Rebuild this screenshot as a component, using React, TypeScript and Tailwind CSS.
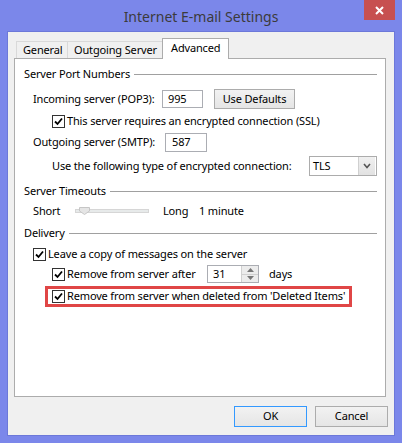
import React from "react"

function Check({ checked = true }: { checked?: boolean }) {
  return (
    <div className="w-[13px] h-[13px] shrink-0 border border-[#333333] bg-white flex items-center justify-center">
      {checked && (
        <svg width="9" height="9" viewBox="0 0 9 9">
          <path d="M1 4.5 L3.5 7 L8 1.5" fill="none" stroke="#000" strokeWidth="1.8" />
        </svg>
      )}
    </div>
  )
}

function GroupHeader({ label }: { label: string }) {
  return (
    <div className="h-[16px] flex items-center pl-[9px] pr-[8px]">
      <span className="whitespace-nowrap">{label}</span>
      <div className="flex-1 ml-[4px] h-px bg-[#a0a0a0]" />
    </div>
  )
}

export default function App() {
  return (
    <div
      className="w-[402px] h-[443px] bg-[#7b87ea] text-[11px] tracking-[-0.15px] text-black overflow-hidden"
      style={{ fontFamily: "'Noto Sans', 'Open Sans', sans-serif" }}
    >
      {/* title bar */}
      <div className="relative h-[31px] flex items-center justify-center">
        <span className="text-[14px] tracking-normal text-[#3b3b3b] pt-[1px]">Internet E-mail Settings</span>
        <div className="absolute right-[7px] top-0 w-[31px] h-[20px] bg-[#c75050] flex items-center justify-center">
          <svg width="9" height="9" viewBox="0 0 9 9">
            <path d="M1 1 L8 8 M8 1 L1 8" stroke="#fff" strokeWidth="2" />
          </svg>
        </div>
      </div>

      {/* client area */}
      <div className="ml-[7px] w-[388px] h-[405px] bg-[#f0f0f0] border border-[#6c78d9] flex flex-col">
        {/* tabs */}
        <div className="h-[26px] flex items-end pl-[8px] pt-[6px] whitespace-nowrap">
          <div className="h-[17px] w-[52px] border border-b-0 border-[#d9d9d9] bg-[#f0f0f0] flex items-center pl-[6px]">
            General
          </div>
          <div className="h-[17px] w-[95px] border border-b-0 border-l-0 border-[#d9d9d9] bg-[#f0f0f0] flex items-center pl-[6px]">
            Outgoing Server
          </div>
          <div className="relative -mb-px z-10 h-[21px] w-[67px] -ml-px border border-b-0 border-[#acacac] bg-white flex items-center pl-[8px] pb-[2px]">
            Advanced
          </div>
        </div>

        {/* panel */}
        <div className="ml-[6px] w-[372px] h-[339px] border border-[#acacac] bg-white flex flex-col">
          <div className="mt-[7px]">
            <GroupHeader label="Server Port Numbers" />
          </div>

          <div className="mt-[6px] h-[22px] flex items-center pl-[18px]">
            <div className="w-[129px] whitespace-nowrap">Incoming server (POP3):</div>
            <div className="w-[41px] h-[18px] border border-[#abadb3] bg-white flex items-center pl-[5px]">995</div>
            <div className="ml-[11px] w-[81px] h-[20px] border border-[#acacac] bg-gradient-to-b from-[#f2f2f2] to-[#e5e5e5] flex items-center justify-center">
              Use Defaults
            </div>
          </div>

          <div className="mt-[4px] h-[14px] flex items-center pl-[37px]">
            <Check />
            <span className="ml-[2px] whitespace-nowrap">This server requires an encrypted connection (SSL)</span>
          </div>

          <div className="mt-[3px] h-[22px] flex items-center pl-[18px]">
            <div className="w-[132px] whitespace-nowrap">Outgoing server (SMTP):</div>
            <div className="w-[42px] h-[19px] border border-[#abadb3] bg-white flex items-center pl-[6px]">587</div>
          </div>

          <div className="mt-[2px] h-[22px] flex items-center pl-[37px]">
            <div className="w-[257px] whitespace-nowrap">Use the following type of encrypted connection:</div>
            <div className="w-[68px] h-[20px] border border-[#acacac] bg-white flex items-center">
              <span className="flex-1 pl-[3px]">TLS</span>
              <div className="w-[17px] h-[18px] mr-px bg-gradient-to-b from-[#f0f0f0] to-[#e2e2e2] border-l border-[#d0d0d0] flex items-center justify-center">
                <svg width="8" height="6" viewBox="0 0 8 6">
                  <path d="M1 1 L4 4.5 L7 1" fill="none" stroke="#555" strokeWidth="1.6" />
                </svg>
              </div>
            </div>
          </div>

          <div className="mt-[6px]">
            <GroupHeader label="Server Timeouts" />
          </div>

          <div className="mt-[3px] h-[18px] flex items-center pl-[18px]">
            <div className="w-[42px]">Short</div>
            <div className="relative w-[74px] h-[4px] bg-[#e7eaea] border border-[#d6d6d6]">
              <svg className="absolute left-[3px] -top-[3px]" width="11" height="8" viewBox="0 0 11 8">
                <path d="M0.5 0.5 H10.5 V4 L5.5 7.5 L0.5 4 Z" fill="#e5e5e5" stroke="#c6c6c6" />
              </svg>
            </div>
            <div className="ml-[14px] w-[36px]">Long</div>
            <div>1 minute</div>
          </div>

          <div className="mt-[5px]">
            <GroupHeader label="Delivery" />
          </div>

          <div className="mt-[6px] h-[14px] flex items-center pl-[18px]">
            <Check />
            <span className="ml-[2px] whitespace-nowrap">Leave a copy of messages on the server</span>
          </div>

          <div className="mt-[4px] h-[18px] flex items-center pl-[37px]">
            <Check />
            <span className="ml-[2px] w-[140px] whitespace-nowrap">Remove from server after</span>
            <div className="w-[52px] h-[18px] border border-[#abadb3] bg-white flex items-center">
              <span className="flex-1 pl-[5px]">31</span>
              <div className="w-[17px] h-full flex flex-col border-l border-[#d0d0d0]">
                <div className="flex-1 bg-[#ececec] border-b border-[#d0d0d0] flex items-center justify-center">
                  <svg width="7" height="4" viewBox="0 0 7 4"><path d="M0 4 L3.5 0 L7 4 Z" fill="#777" /></svg>
                </div>
                <div className="flex-1 bg-[#ececec] flex items-center justify-center">
                  <svg width="7" height="4" viewBox="0 0 7 4"><path d="M0 0 L3.5 4 L7 0 Z" fill="#777" /></svg>
                </div>
              </div>
            </div>
            <span className="ml-[10px]">days</span>
          </div>

          <div className="mt-[3px] ml-[30px] w-[307px] h-[21px] border-[3px] border-[#e04646] flex items-center pl-[4px]">
            <Check />
            <span className="ml-[2px] whitespace-nowrap">Remove from server when deleted from 'Deleted Items'</span>
          </div>
        </div>

        {/* buttons */}
        <div className="mt-[9px] flex justify-end pr-[6px] gap-[8px]">
          <div className="w-[73px] h-[21px] border border-[#3399ff] bg-gradient-to-b from-[#f2f2f2] to-[#e5e5e5] flex items-center justify-center">
            OK
          </div>
          <div className="w-[73px] h-[21px] border border-[#acacac] bg-gradient-to-b from-[#f2f2f2] to-[#e5e5e5] flex items-center justify-center">
            Cancel
          </div>
        </div>
      </div>
    </div>
  )
}
